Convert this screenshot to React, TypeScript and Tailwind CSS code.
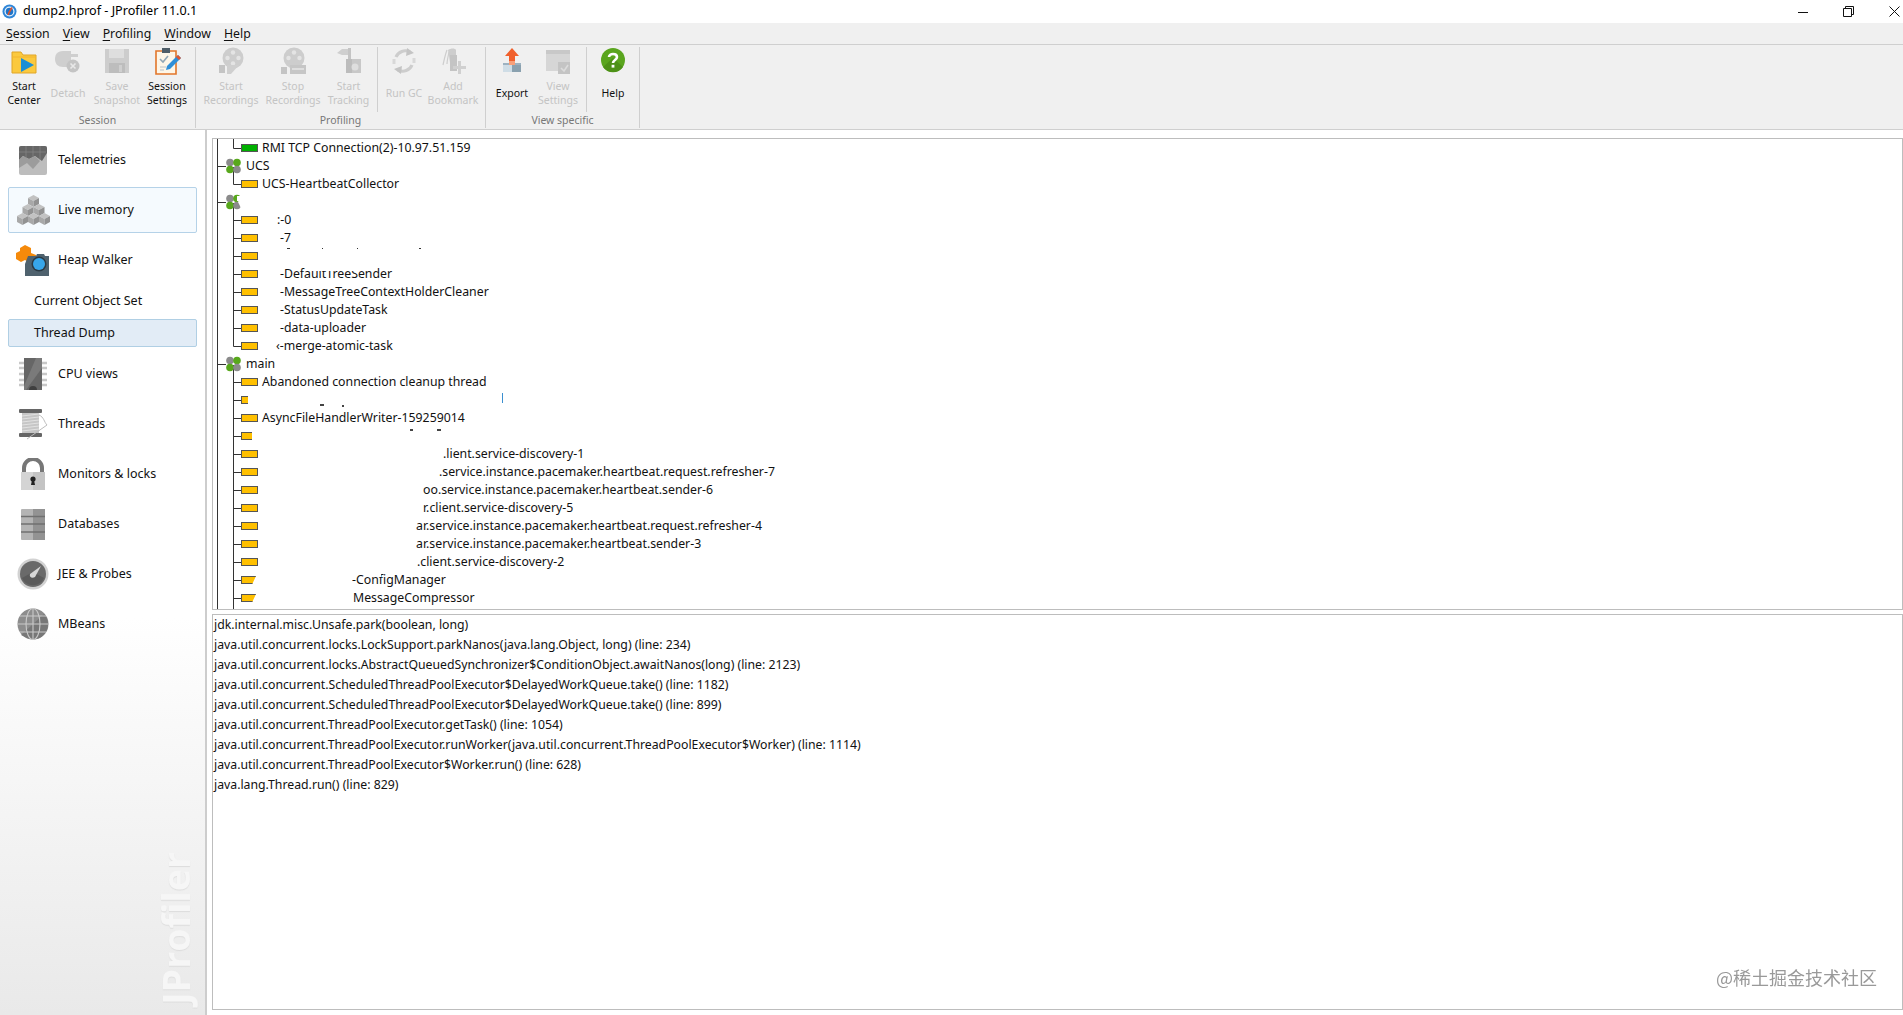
import React from 'react';

const FONT = "font-['Noto_Sans','Open_Sans',sans-serif]";

function AppIcon() {
  return (
    <svg width="15" height="15" viewBox="0 0 15 15">
      <circle cx="7.5" cy="7.5" r="7" fill="#2f86d8" />
      <circle cx="7.5" cy="7.5" r="5" fill="#e9f3fb" />
      <circle cx="7.5" cy="7.5" r="3.8" fill="#1f74c8" />
      <path d="M10 3.5 L7 8.5 L6.2 11" stroke="#e0532c" strokeWidth="1.6" fill="none" />
    </svg>
  );
}

function Ctl({ w, children }: { w: number; children: React.ReactNode }) {
  return (
    <svg width={w} height={w} viewBox={`0 0 ${w} ${w}`} fill="none" stroke="#111" strokeWidth="1">
      {children}
    </svg>
  );
}

function TitleBar() {
  return (
    <div className="flex h-[23px] shrink-0 items-center bg-white pl-[2px] pr-[3px]">
      <AppIcon />
      <span className="ml-[6px] text-[12.6px] text-black">dump2.hprof - JProfiler 11.0.1</span>
      <div className="ml-auto flex items-center gap-[35px]">
        <Ctl w={10}>
          <path d="M0 5.5 H10" />
        </Ctl>
        <Ctl w={11}>
          <path d="M2.5 2.5 V.5 H10.5 V8.5 H8.5 M.5 2.5 H8.5 V10.5 H.5 Z" />
        </Ctl>
        <Ctl w={11}>
          <path d="M.5 .5 L10.5 10.5 M10.5 .5 L.5 10.5" />
        </Ctl>
      </div>
    </div>
  );
}

function MenuItem({ u, rest }: { u: string; rest: string }) {
  return (
    <span className="text-[12.3px] text-[#111]">
      <span className="underline underline-offset-2">{u}</span>
      {rest}
    </span>
  );
}

function MenuBar() {
  return (
    <div className="flex h-[22px] shrink-0 items-center gap-[13px] border-b border-[#cfcfcf] bg-[#f0f0f0] pl-[6px] pt-[1px]">
      <MenuItem u="S" rest="ession" />
      <MenuItem u="V" rest="iew" />
      <MenuItem u="P" rest="rofiling" />
      <MenuItem u="W" rest="indow" />
      <MenuItem u="H" rest="elp" />
    </div>
  );
}

/* toolbar icons, drawn on a 28x28 box */
function Ico({ children }: { children: React.ReactNode }) {
  return (
    <svg width="28" height="28" viewBox="0 0 28 28">
      {children}
    </svg>
  );
}

const toolIcons: Record<string, React.ReactNode> = {
  start: (
    <Ico>
      <path d="M2 5 H11 L13 8 H26 V26 H2 Z" fill="#fbc93e" stroke="#e0a526" />
      <path d="M2 10 H26" stroke="#f3b52e" />
      <path d="M11 11 L24 18 L11 25 Z" fill="#1b8fd6" />
    </Ico>
  ),
  detach: (
    <Ico>
      <path d="M9 4 C3 4 1 8 1 12 C1 17 4 20 9 20 L17 20 L17 4 Z" fill="#cfcfcf" />
      <path d="M17 7 H24 V10 H17 Z M17 13 H21 V16 H17 Z" fill="#cfcfcf" />
      <circle cx="19" cy="19" r="6.5" fill="#c4c4c4" />
      <path d="M16.5 16.5 L21.5 21.5 M21.5 16.5 L16.5 21.5" stroke="#e8e8e8" strokeWidth="1.6" />
    </Ico>
  ),
  save: (
    <Ico>
      <path d="M2 2 H26 V26 H2 Z" fill="#cdcdcd" />
      <path d="M6 2 H21 V11 H6 Z" fill="#dedede" />
      <path d="M6 16 H22 V26 H6 Z" fill="#bdbdbd" />
      <path d="M16 18 H19 V25 H16 Z" fill="#cfcfcf" />
    </Ico>
  ),
  settings: (
    <Ico>
      <path d="M3 4 H23 V27 H3 Z" fill="#fdf6e8" stroke="#e2762a" strokeWidth="1.6" />
      <path d="M9 1 H17 V6 H9 Z" fill="#4e5d68" />
      <path d="M7 12 L10 15 L15 9" stroke="#8fa6b6" strokeWidth="1.6" fill="none" />
      <path d="M7 20 H13 M7 23 H11" stroke="#b8c2c9" />
      <path d="M25 8 L28 11 L17 22 L13 23 L14 19 Z" fill="#2f8fd8" />
      <path d="M25 8 L28 11 L26 13 L23 10 Z" fill="#e2552c" />
    </Ico>
  ),
  record: (
    <Ico>
      <circle cx="16" cy="11" r="10.5" fill="#cdcdcd" />
      <circle cx="16" cy="5.5" r="2.2" fill="#e4e4e4" />
      <circle cx="16" cy="16.5" r="2.2" fill="#e4e4e4" />
      <circle cx="10.5" cy="11" r="2.2" fill="#e4e4e4" />
      <circle cx="21.5" cy="11" r="2.2" fill="#e4e4e4" />
      <path d="M2 18 H8 V26 H2 Z" fill="#c4c4c4" />
      <path d="M10 18 L22 18 L14 27 L10 27 Z" fill="#cfcfcf" />
    </Ico>
  ),
  stop: (
    <Ico>
      <circle cx="15" cy="11" r="10.5" fill="#cdcdcd" />
      <circle cx="15" cy="5.5" r="2.2" fill="#e4e4e4" />
      <circle cx="9.5" cy="11" r="2.2" fill="#e4e4e4" />
      <circle cx="20.5" cy="11" r="2.2" fill="#e4e4e4" />
      <path d="M2 20 H8 V27 H2 Z" fill="#c4c4c4" />
      <path d="M11 18 H27 V27 H11 Z" fill="#c6c6c6" />
      <path d="M13 22 H25" stroke="#e6e6e6" strokeWidth="1.5" />
    </Ico>
  ),
  tracking: (
    <Ico>
      <path d="M2 6 L7 2 H13 V8 H7 Z" fill="#cfcfcf" />
      <path d="M13 1 H16 V12 H13 Z" fill="#c4c4c4" />
      <path d="M11 12 H26 V26 H11 Z" fill="#c8c8c8" />
      <path d="M11 12 H17 V26 H11 Z" fill="#bcbcbc" />
      <circle cx="20" cy="20" r="3.5" fill="#dedede" />
    </Ico>
  ),
  gc: (
    <Ico>
      <path d="M6 10 A10 10 0 0 1 20 5" stroke="#cdcdcd" strokeWidth="3.2" fill="none" />
      <path d="M22 18 A10 10 0 0 1 8 23" stroke="#cdcdcd" strokeWidth="3.2" fill="none" />
      <path d="M17 1 L24 6 L16 9 Z M11 27 L4 22 L12 19 Z" fill="#c4c4c4" />
      <path d="M4 12 L4 17 M24 11 L24 16" stroke="#d8d8d8" strokeWidth="3" />
    </Ico>
  ),
  bookmark: (
    <Ico>
      <path d="M9 3 C12 1 16 1 17 3 V22 L12 22 Z" fill="#cdcdcd" />
      <path d="M11 8 H18 V24 H11 Z" fill="#c4c4c4" />
      <path d="M8 3 C6 8 5 14 4 18 M10 5 C9 10 8 14 8 17" stroke="#cdcdcd" strokeWidth="1.2" fill="none" />
      <path d="M19 14 H22 V19 H27 V22 H22 V27 H19 V22 H14 V19 H19 Z" fill="#d0d0d0" />
    </Ico>
  ),
  export: (
    <Ico>
      <path d="M14 1 L21 9 H17 V18 H11 V9 H7 Z" fill="#f0602c" />
      <path d="M5 16 H23 V25 H5 Z" fill="#9db2c1" />
      <path d="M5 18 H14 V25 H5 Z" fill="#cfdde6" />
      <path d="M14 18 H23 V25 H14 Z" fill="#8aa1af" />
      <path d="M11 14 H17 V18 H11 Z" fill="#f7a07a" />
    </Ico>
  ),
  view: (
    <Ico>
      <path d="M2 3 H26 V24 H2 Z" fill="#d6d6d6" />
      <path d="M2 3 H26 V7 H2 Z" fill="#c8c8c8" />
      <path d="M14 15 H26 V27 H14 Z" fill="#c4c4c4" />
      <path d="M17 21 L20 24 L24 18" stroke="#dcdcdc" strokeWidth="1.6" fill="none" />
    </Ico>
  ),
  help: (
    <Ico>
      <circle cx="14" cy="13" r="12" fill="#5aa51e" />
      <path d="M4 20 A12 12 0 0 0 24 20 L14 11 Z" fill="#4d9117" />
      <path d="M10 10 C10 6 18 6 18 10 C18 13 14 13 14 16" stroke="#fff" strokeWidth="2.6" fill="none" />
      <rect x="12.6" y="17.8" width="2.8" height="2.8" fill="#fff" />
    </Ico>
  ),
};

function ToolButton({
  icon,
  lines,
  off,
  w,
}: {
  icon: string;
  lines: string[];
  off?: boolean;
  w: string;
}) {
  return (
    <div className={`flex shrink-0 flex-col items-center ${w}`}>
      <div className="flex h-[29px] items-start justify-center">{toolIcons[icon]}</div>
      <div
        className={`flex h-[33px] flex-col justify-center whitespace-nowrap text-center text-[10.5px] leading-[14px] ${
          off ? 'text-[#c4c4c4]' : 'text-[#111]'
        }`}
      >
        {lines.map((l) => (
          <span key={l}>{l}</span>
        ))}
      </div>
    </div>
  );
}

function ToolGroup({
  title,
  children,
  w,
}: {
  title: string;
  children: React.ReactNode;
  w: string;
}) {
  return (
    <div className={`flex shrink-0 flex-col border-r border-[#cfcfcf] ${w}`}>
      <div className="flex h-[67px]">{children}</div>
      <div className="flex-1 text-center text-[10.5px] leading-[16px] text-[#777]">{title}</div>
    </div>
  );
}

function InnerSep() {
  return <div className="h-[65px] w-px shrink-0 bg-[#cfcfcf]" />;
}

function Toolbar() {
  return (
    <div className="flex h-[85px] shrink-0 border-b border-[#cfcfcf] bg-[#f0f0f0] pb-[1px] pt-[2px]">
      <ToolGroup title="Session" w="w-[196px]">
        <ToolButton icon="start" lines={['Start', 'Center']} w="w-[48px]" />
        <ToolButton icon="detach" lines={['Detach']} off w="w-[40px]" />
        <ToolButton icon="save" lines={['Save', 'Snapshot']} off w="w-[58px]" />
        <ToolButton icon="settings" lines={['Session', 'Settings']} w="w-[42px]" />
      </ToolGroup>
      <ToolGroup title="Profiling" w="w-[290px]">
        <ToolButton icon="record" lines={['Start', 'Recordings']} off w="w-[70px]" />
        <ToolButton icon="stop" lines={['Stop', 'Recordings']} off w="w-[54px]" />
        <ToolButton icon="tracking" lines={['Start', 'Tracking']} off w="w-[57px]" />
        <InnerSep />
        <ToolButton icon="gc" lines={['Run GC']} off w="w-[52px]" />
        <ToolButton icon="bookmark" lines={['Add', 'Bookmark']} off w="w-[46px]" />
      </ToolGroup>
      <ToolGroup title="View specific" w="w-[154px]">
        <ToolButton icon="export" lines={['Export']} w="w-[52px]" />
        <ToolButton icon="view" lines={['View', 'Settings']} off w="w-[40px] mr-[8px]" />
        <InnerSep />
        <ToolButton icon="help" lines={['Help']} w="w-[52px]" />
      </ToolGroup>
    </div>
  );
}

function Cube({ x, y }: { x: number; y: number }) {
  return (
    <g transform={`translate(${x} ${y})`}>
      <path d="M5.5 0 L11 3 L5.5 6 L0 3 Z" fill="#c2c2c2" />
      <path d="M0 3 L5.5 6 V12 L0 9 Z" fill="#a8a8a8" />
      <path d="M11 3 L5.5 6 V12 L11 9 Z" fill="#929292" />
    </g>
  );
}

const navIcons: Record<string, React.ReactNode> = {
  telemetries: (
    <svg width="30" height="30" viewBox="0 0 30 30">
      <rect x="1" y="1" width="28" height="29" rx="2" fill="#bdbdbd" />
      <path d="M1 3 a2 2 0 0 1 2 -2 H27 a2 2 0 0 1 2 2 V8 L24 16 L17 11 L11 14 L5 11 L1 15 Z" fill="#666" />
      <path d="M1 15 L5 11 L11 14 L17 11 L22 16 L15 24 L9 18 L1 23 Z" fill="#9c9c9c" />
      <path d="M8 1 V13 M15 1 V12 M22 1 V15 M1 7 H28" stroke="#888" strokeWidth=".7" />
    </svg>
  ),
  memory: (
    <svg width="33" height="30" viewBox="0 0 33 30">
      <Cube x={11} y={0} />
      <Cube x={5.5} y={9} />
      <Cube x={16.5} y={9} />
      <Cube x={0} y={18} />
      <Cube x={11} y={18} />
      <Cube x={22} y={18} />
    </svg>
  ),
  heap: (
    <svg width="34" height="32" viewBox="0 0 34 32">
      <path d="M9 1 L15 4 V9 L20 11 V16 L14 19 L9 16 L5 18 L0 15 V9 L4 7 V4 Z" fill="#f58a0b" />
      <path d="M9 20 L12 12 H20 L21 10 H28 L29 12 H33 V32 H9 Z" fill="#4f626e" />
      <circle cx="23" cy="20" r="7.5" fill="#2b3a44" />
      <circle cx="23" cy="20" r="6" fill="#37a6ea" />
    </svg>
  ),
  cpu: (
    <svg width="30" height="32" viewBox="0 0 30 32">
      <path d="M1 5 H29 M1 10 H29 M1 16 H29 M1 22 H29 M1 27 H29" stroke="#c8c8c8" strokeWidth="2.4" />
      <rect x="6" y="0" width="18" height="32" fill="#666" />
      <path d="M24 0 V10 L8 32 H6 V28 L18 0 Z" fill="#7a7a7a" />
      <path d="M11 32 A4 4 0 0 1 19 32 Z" fill="#3f3f3f" />
    </svg>
  ),
  threads: (
    <svg width="30" height="31" viewBox="0 0 30 31">
      <rect x="1" y="0" width="23" height="4" rx="1" fill="#666" />
      <rect x="1" y="24" width="23" height="4" rx="1" fill="#666" />
      <rect x="4" y="4" width="17" height="20" fill="#c6c6c6" />
      <path d="M4 7 L21 5 M4 10 L21 8 M4 13 L21 11 M4 16 L21 14 M4 19 L21 17 M4 22 L21 20" stroke="#e2e2e2" />
      <path d="M21 6 C26 8 26 13 29 16 L9 30" stroke="#bdbdbd" fill="none" />
    </svg>
  ),
  lock: (
    <svg width="26" height="32" viewBox="0 0 26 32">
      <path d="M4 15 V10 A9 9 0 0 1 22 10 V15" stroke="#777" strokeWidth="4" fill="none" />
      <rect x="1" y="14" width="24" height="18" fill="#d4d4d4" />
      <rect x="13" y="14" width="12" height="18" fill="#c4c4c4" />
      <circle cx="13" cy="21" r="2.6" fill="#222" />
      <path d="M12 22 H14 L15 27 H11 Z" fill="#222" />
    </svg>
  ),
  db: (
    <svg width="26" height="31" viewBox="0 0 26 31">
      <rect x="1" y="0" width="24" height="31" rx="1" fill="#b4b4b4" />
      <rect x="13" y="0" width="12" height="31" fill="#939393" />
      <path d="M1 7.5 H25 M1 15 H25 M1 23 H25" stroke="#707070" strokeWidth="1.4" />
    </svg>
  ),
  jee: (
    <svg width="32" height="32" viewBox="0 0 32 32">
      <circle cx="16" cy="16" r="15.5" fill="#d2d2d2" />
      <circle cx="16" cy="16" r="13" fill="#6a6a6a" />
      <path d="M5 20 A12 12 0 0 0 27 20 L16 14 Z" fill="#5b5b5b" />
      <path d="M24 8 L18 19 C15 21 12 19 13 16 Z" fill="#d8d8d8" />
    </svg>
  ),
  globe: (
    <svg width="32" height="32" viewBox="0 0 32 32">
      <circle cx="16" cy="16" r="15.5" fill="#8d8d8d" />
      <path d="M4 27 L27 6 A15 15 0 0 1 10 30 Z" fill="#777" />
      <g fill="none" stroke="#c9c9c9" strokeWidth="1.1">
        <ellipse cx="16" cy="16" rx="7" ry="15.5" />
        <path d="M16 .5 V31.5 M.5 16 H31.5 M3 8 H29 M3 24 H29" />
      </g>
    </svg>
  ),
};

function NavItem({ icon, label, active }: { icon: string; label: string; active?: boolean }) {
  return (
    <div className="flex h-[50px] items-center px-[8px] py-[2px]">
      <div
        className={`flex h-full w-full items-center rounded-[2px] border ${
          active ? 'border-[#b5d2e8] bg-[#f5fafe]' : 'border-transparent'
        }`}
      >
        <div className="flex w-[49px] shrink-0 justify-center pr-[1px]">{navIcons[icon]}</div>
        <span className="text-[12.5px] text-[#111]">{label}</span>
      </div>
    </div>
  );
}

function SubItem({ label, active }: { label: string; active?: boolean }) {
  return (
    <div className="flex h-[32px] items-center px-[8px] py-[2px]">
      <div
        className={`flex h-full w-full items-center rounded-[2px] border pl-[25px] text-[12.5px] text-[#111] ${
          active ? 'border-[#b0cfe4] bg-[#e2ecf6]' : 'border-transparent'
        }`}
      >
        {label}
      </div>
    </div>
  );
}

function Sidebar() {
  return (
    <aside className="relative w-[207px] shrink-0 overflow-hidden border-r-2 border-[#cdcdcd] bg-gradient-to-b from-white from-55% to-[#e9e9e9] pt-[5px]">
      <NavItem icon="telemetries" label="Telemetries" />
      <NavItem icon="memory" label="Live memory" active />
      <NavItem icon="heap" label="Heap Walker" />
      <SubItem label="Current Object Set" />
      <SubItem label="Thread Dump" active />
      <NavItem icon="cpu" label="CPU views" />
      <NavItem icon="threads" label="Threads" />
      <NavItem icon="lock" label="Monitors & locks" />
      <NavItem icon="db" label="Databases" />
      <NavItem icon="jee" label="JEE & Probes" />
      <NavItem icon="globe" label="MBeans" />
      <span className="absolute bottom-[10px] right-[8px] rotate-180 font-['Open_Sans',sans-serif] text-[37.5px] font-bold leading-[42px] text-[#f6f6f6] [text-shadow:-1px_0_1px_#dcdcdc] [writing-mode:vertical-rl]">
        JProfiler
      </span>
    </aside>
  );
}

function Clover() {
  return (
    <>
      <circle cx="17" cy="5.5" r="3.8" fill="#8b8b8b" />
      <circle cx="24" cy="5.5" r="3.8" fill="#58a81c" />
      <circle cx="17" cy="12.5" r="3.8" fill="#58a81c" />
      <circle cx="24" cy="12.5" r="3.8" fill="#8b8b8b" />
    </>
  );
}

function GroupRow({ label }: { label?: string }) {
  return (
    <div className="flex h-[18px] items-center">
      <svg width="30" height="18" className="shrink-0" stroke="#333">
        <path d="M4.5 0 V18 M4 9.5 H13" fill="none" />
        <path d="M20.5 10 V18" fill="none" />
        <g stroke="none">
          <Clover />
        </g>
        {!label && <rect x="24" y="3" width="6" height="5" fill="#fff" stroke="none" />}
        {!label && <path d="M25 9 L28 3 V15 Z" fill="#fff" stroke="none" />}
      </svg>
      {label && <span className="ml-[3px]">{label}</span>}
    </div>
  );
}

function LeafRow({
  text,
  pad = '',
  last,
  color = '#ffc000',
  bar = 'w-[17px]',
  cut,
  children,
}: {
  text?: string;
  pad?: string;
  last?: boolean;
  color?: string;
  bar?: string;
  cut?: string;
  children?: React.ReactNode;
}) {
  return (
    <div className="flex h-[18px] items-center">
      <svg width="28" height="18" className="shrink-0" fill="none" stroke="#333">
        <path d="M4.5 0 V18" />
        <path d={last ? 'M20.5 0 V9.5 H28' : 'M20.5 0 V18 M20.5 9.5 H28'} />
      </svg>
      <div className="flex w-[17px] shrink-0">
        <div
          className={`h-[8px] border border-[#555] ${bar}`}
          style={{ backgroundColor: color }}
        />
      </div>
      {text && (
        <span className={`relative ml-[4px] whitespace-nowrap ${pad}`}>
          {text}
          {cut && <span className={`absolute top-0 h-[6px] bg-white ${cut}`} />}
        </span>
      )}
      {children}
    </div>
  );
}

function Speck({ cls }: { cls: string }) {
  return <span className={`block shrink-0 self-start ${cls}`} />;
}

function ThreadTree() {
  return (
    <div className="h-[472px] shrink-0 overflow-hidden border border-[#bdbdbd] bg-white text-[12.3px] leading-[18px] text-[#111]">
      <LeafRow text="RMI TCP Connection(2)-10.97.51.159" color="#00b000" last />
      <GroupRow label="UCS" />
      <LeafRow text="UCS-HeartbeatCollector" last />
      <GroupRow />
      <LeafRow text=":-0" pad="pl-[15px]" />
      <LeafRow text="-7" pad="pl-[18px]" />
      <LeafRow>
        <Speck cls="ml-[29px] mt-[1px] h-[1px] w-[3px] bg-[#333]" />
        <Speck cls="ml-[32px] mt-[1px] h-[1px] w-[1px] bg-[#333]" />
        <Speck cls="ml-[34px] mt-[1px] h-[1px] w-[1px] bg-[#333]" />
        <Speck cls="ml-[61px] mt-[1px] h-[1px] w-[2px] bg-[#333]" />
      </LeafRow>
      <LeafRow text="-DefaultTreeSender" pad="pl-[18px]" cut="left-[54px] w-[48px]" />
      <LeafRow text="-MessageTreeContextHolderCleaner" pad="pl-[18px]" />
      <LeafRow text="-StatusUpdateTask" pad="pl-[18px]" />
      <LeafRow text="-data-uploader" pad="pl-[18px]" />
      <LeafRow text="‹-merge-atomic-task" pad="pl-[14px]" last />
      <GroupRow label="main" />
      <LeafRow text="Abandoned connection cleanup thread" />
      <LeafRow bar="w-[7px] border-r-0">
        <Speck cls="ml-[62px] mt-[13px] h-[2px] w-[4px] bg-[#444]" />
        <Speck cls="ml-[18px] mt-[14px] h-[2px] w-[2px] bg-[#444]" />
        <Speck cls="ml-[158px] mt-[2px] h-[10px] w-[1px] bg-[#3b8fd0]" />
      </LeafRow>
      <LeafRow text="AsyncFileHandlerWriter-159259014" />
      <LeafRow bar="w-[11px] border-r-0">
        <Speck cls="ml-[152px] mt-[2px] h-[2px] w-[3px] bg-[#444]" />
        <Speck cls="ml-[24px] mt-[2px] h-[2px] w-[4px] bg-[#444]" />
      </LeafRow>
      <LeafRow text=".lient.service-discovery-1" pad="pl-[181px]" />
      <LeafRow text=".service.instance.pacemaker.heartbeat.request.refresher-7" pad="pl-[177px]" />
      <LeafRow text="oo.service.instance.pacemaker.heartbeat.sender-6" pad="pl-[161px]" />
      <LeafRow text="r.client.service-discovery-5" pad="pl-[161px]" />
      <LeafRow text="ar.service.instance.pacemaker.heartbeat.request.refresher-4" pad="pl-[154px]" />
      <LeafRow text="ar.service.instance.pacemaker.heartbeat.sender-3" pad="pl-[154px]" />
      <LeafRow text=".client.service-discovery-2" pad="pl-[155px]" />
      <LeafRow
        text="-ConfigManager"
        pad="pl-[90px]"
        cut="left-[113px] w-[6px]"
        bar="w-[15px] border-r-0 [clip-path:polygon(0_0,100%_0,75%_100%,0_100%)]"
      />
      <LeafRow
        text="MessageCompressor"
        pad="pl-[91px]"
        bar="w-[15px] border-r-0 [clip-path:polygon(0_0,100%_0,75%_100%,0_100%)]"
      />
      <LeafRow />
    </div>
  );
}

const STACK = [
  'jdk.internal.misc.Unsafe.park(boolean, long)',
  'java.util.concurrent.locks.LockSupport.parkNanos(java.lang.Object, long) (line: 234)',
  'java.util.concurrent.locks.AbstractQueuedSynchronizer$ConditionObject.awaitNanos(long) (line: 2123)',
  'java.util.concurrent.ScheduledThreadPoolExecutor$DelayedWorkQueue.take() (line: 1182)',
  'java.util.concurrent.ScheduledThreadPoolExecutor$DelayedWorkQueue.take() (line: 899)',
  'java.util.concurrent.ThreadPoolExecutor.getTask() (line: 1054)',
  'java.util.concurrent.ThreadPoolExecutor.runWorker(java.util.concurrent.ThreadPoolExecutor$Worker) (line: 1114)',
  'java.util.concurrent.ThreadPoolExecutor$Worker.run() (line: 628)',
  'java.lang.Thread.run() (line: 829)',
];

function StackPanel() {
  return (
    <div className="mt-[4px] h-[396px] shrink-0 border border-[#bdbdbd] bg-white text-[12.27px] leading-[20px] text-[#111]">
      {STACK.map((line) => (
        <div key={line} className="whitespace-nowrap pl-[1px]">
          {line}
        </div>
      ))}
    </div>
  );
}

export default function App() {
  return (
    <div className={`relative flex h-screen w-full flex-col overflow-hidden bg-white ${FONT}`}>
      <TitleBar />
      <MenuBar />
      <Toolbar />
      <div className="flex min-h-0 flex-1">
        <Sidebar />
        <main className="min-w-0 flex-1 pl-[5px] pt-[8px]">
          <ThreadTree />
          <StackPanel />
        </main>
      </div>
      <span className="absolute bottom-[24px] right-[26px] font-['Noto_Sans_CJK_SC',sans-serif] text-[18px] text-[#999] blur-[0.3px]">
        @稀土掘金技术社区
      </span>
    </div>
  );
}
